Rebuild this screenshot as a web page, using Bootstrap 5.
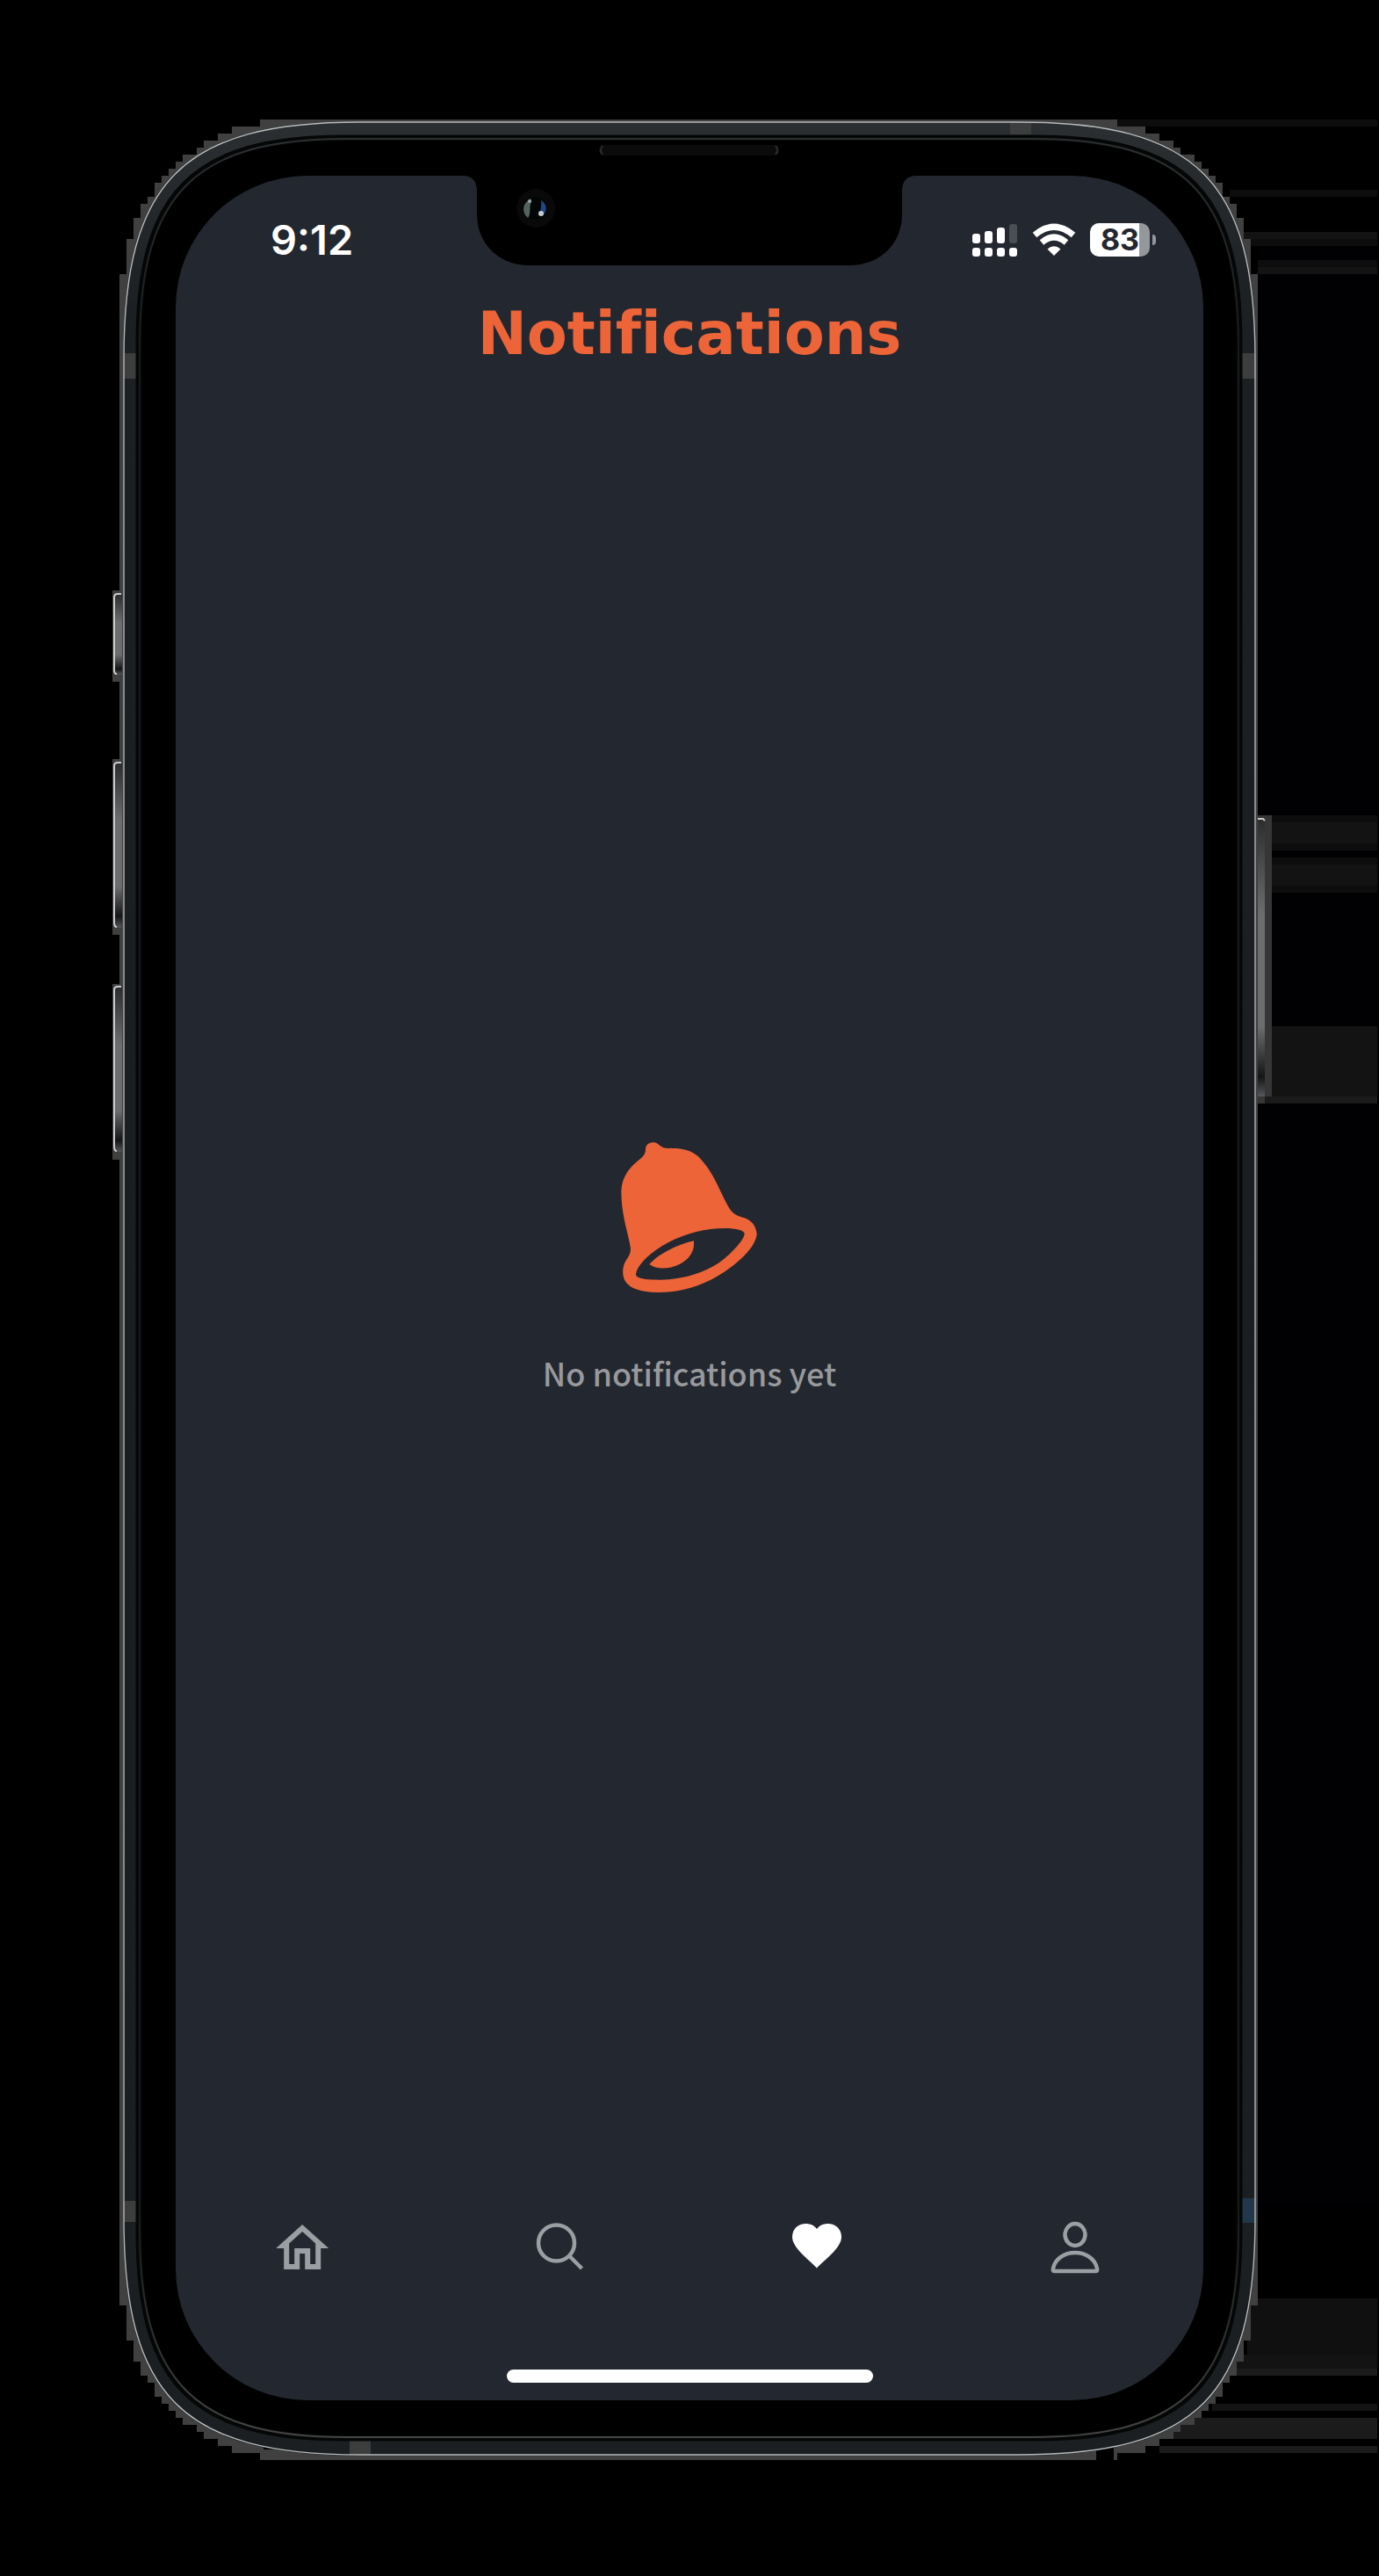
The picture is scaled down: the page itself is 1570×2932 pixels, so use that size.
<!DOCTYPE html>
<html lang="en">
<head>
<meta charset="utf-8">
<meta name="viewport" content="width=device-width, initial-scale=1">
<title>Notifications</title>
<link href="https://cdn.jsdelivr.net/npm/bootstrap@5.3.0/dist/css/bootstrap.min.css" rel="stylesheet">
<style>
  body { background: #000; font-family: "Noto Sans CJK SC", "Noto Sans", sans-serif; }
  .stage { padding: 200px; }
  .shell-art { pointer-events: none; }
  .app-screen { background: #23272f; border-radius: 150px; z-index: 1; }
  .notch-art { width: 516px; height: 102px; }
  .status-row { padding: 50px 54px 0 108px; color: #fff; font-family: Inter, sans-serif; }
  .clock { font-size: 47px; line-height: 46px; font-weight: 600; }
  .battery-box { width: 68px; height: 38px; border-radius: 10px; background: linear-gradient(90deg, #fff 56px, #94979b 56px); color: #23272f; font-size: 34px; line-height: 38px; font-weight: 700; }
  .battery-tip { width: 4px; height: 12px; margin-left: 3px; border-radius: 0 6px 6px 0; background: #94979b; }
  .page-title { margin: 44px 0 0; color: #ec6437; font: 700 67px/80px "DejaVu Sans", sans-serif; font-variant-ligatures: none; }
  .empty-note { gap: 66px; }
  .empty-text { color: #97999d; font-size: 36px; line-height: 48px; font-weight: 500; }
  .tab-row { padding-top: 57px; color: #9b9ea3; }
  .tab-link { color: inherit; line-height: 0; }
  .tab-link.active { color: #fff; }
  .home-bar { width: 417px; height: 15px; margin: 102px auto 20px; border-radius: 8px; background: #fff; }
</style>
</head>
<body>
<div class="stage position-relative d-flex min-vh-100">

  <!-- Device body -->
  <svg class="shell-art position-absolute top-0 start-0 w-100 h-100" viewBox="0 0 1570 2932" preserveAspectRatio="none" aria-hidden="true">
    <defs>
      <linearGradient id="key" x1="0" y1="0" x2="0" y2="1">
        <stop offset="0" stop-color="#2b2c2d"/><stop offset=".35" stop-color="#6c6d6f"/><stop offset=".75" stop-color="#6c6d6f"/><stop offset=".93" stop-color="#141517"/><stop offset="1" stop-color="#55575a"/>
      </linearGradient>
      <linearGradient id="rim" x1="0" y1="138" x2="0" y2="2795" gradientUnits="userSpaceOnUse">
        <stop offset="0" stop-color="#2c2f31"/><stop offset=".08" stop-color="#1c2023"/><stop offset=".5" stop-color="#1a1e20"/><stop offset="1" stop-color="#1b1f21"/>
      </linearGradient>
      <linearGradient id="ring" x1="0" y1="0" x2="0" y2="1">
        <stop offset="0" stop-color="#2d3032"/><stop offset=".1" stop-color="#17191a"/><stop offset=".9" stop-color="#17191a"/><stop offset="1" stop-color="#444"/>
      </linearGradient>
      <path id="steps" d="M300 300V136H296V144H264V152H248V160H232V168H224V176H208V184H200V192H192V200H184V208H176V224H168V232H160V248H152V272H144V312H136V320Z"/>
    </defs>
    <rect x="1432" y="270" width="138" height="2240" fill="#010103"/>
    <g shape-rendering="crispEdges">
      <path fill="#0d0d0d" d="M1256 136h312v8h-312zM1400 216h168v8h-168zM1424 272h144v8h-144zM1432 296h136v8h-136zM1432 928h136v8h-136zM1432 960h136v8h-136zM1432 976h136v8h-136zM1432 1008h136v8h-136z"/>
      <path fill="#131313" d="M1416 264h152v8h-152zM1432 304h136v8h-136zM1448 936h120v24h-120zM1448 984h120v24h-120zM1448 1168h120v80h-120zM1400 2680h168v16h-168zM1380 2736h188v8h-188z"/>
      <path fill="#0f100f" d="M1420 2616h148v64h-148z"/>
      <path fill="#1b1b1b" d="M1440 1248h128v8h-128zM1400 2696h168v8h-168zM1330 2752h238v24h-238zM1320 2784h248v8h-248z"/>
      <g fill="#404040">
        <path d="M296 136H1272V148H296zM296 2788H1248V2800H296zM136 312H146V2620H136zM1424 312H1432V2620H1424z"/>
        <use href="#steps"/>
        <use href="#steps" transform="matrix(-1 0 0 1 1568 0)"/>
        <use href="#steps" transform="matrix(1 0 0 -1 0 2936)"/>
        <use href="#steps" transform="matrix(-1 0 0 -1 1568 2936)"/>
        <path d="M128 672h10v104h-10zM128 864h10v200h-10zM128 1120h10v200h-10z"/>
      </g>
      <path fill="#363636" d="M1432 928h16v320h-8v8h-8z"/>
    </g>
    <g fill="url(#key)">
      <rect x="130" y="676" width="9" height="92" rx="2"/><rect x="130" y="868" width="9" height="188" rx="2"/><rect x="130" y="1123" width="9" height="188" rx="2"/>
      <rect x="1432" y="931" width="8" height="317"/>
    </g>
    <path d="M138 676h-4q-4 0-4 4v83q0 4 3 4M138 868h-4q-4 0-4 4v178q0 5 3 5M138 1123h-4q-4 0-4 4v178q0 5 3 5M1432 932h6l2 2" fill="none" stroke="#c9cacb" stroke-width="2"/>
    <path d="M140 408C140 205 207 138 410 138H1160C1363 138 1430 205 1430 408V2525C1430 2728 1363 2795 1160 2795H410C207 2795 140 2728 140 2525Z" fill="url(#rim)"/>
    <path d="M141 402h14v29h-14zM141 2505h16v24h-16zM1413 402h16v29h-16zM1150 139h24v14h-24zM398 2776h24v18h-24z" fill="#3c3d3d"/>
    <path d="M1413 2502h16v28h-16z" fill="#22384a"/>
    <path d="M141 408C141 206 208 139 410 139H1160C1362 139 1429 206 1429 408V2525C1429 2727 1362 2794 1160 2794H410C208 2794 141 2727 141 2525Z" fill="none" stroke="#b9bcbd" stroke-width="1.4"/>
    <path d="M158 391C158 219 220 157 392 157H1178C1350 157 1411 219 1411 391V2540C1411 2713 1350 2775 1178 2775H392C220 2775 158 2713 158 2540Z" fill="#000" stroke="#050606" stroke-width="7"/>
    <path d="M159 393C159 221 222 158 394 158H1176C1348 158 1410 221 1410 393V2539C1410 2711 1348 2774 1176 2774H394C222 2774 159 2711 159 2539Z" fill="none" stroke="url(#ring)" stroke-width="2"/>
    <rect x="682" y="165" width="205" height="12" rx="5" fill="#0b0b0b"/>
    <path d="M686 166q-4 5 0 10M883 166q4 5 0 10" fill="none" stroke="#2c2d2e" stroke-width="2"/>
  </svg>

  <div class="app-screen position-relative flex-grow-1 d-flex flex-column">
    <!-- Camera housing -->
    <svg class="notch-art position-absolute top-0 start-50 translate-middle-x" viewBox="527 200 516 102" aria-hidden="true">
      <path d="M527 199H1043V200Q1027 200 1027 218V244C1027 278 1001 302 968 302H602C569 302 543 278 543 244V218Q543 200 527 200Z" fill="#000"/>
      <circle cx="610" cy="237" r="22" fill="#090909"/>
      <circle cx="610" cy="237" r="13" fill="#030607"/>
      <path d="M604 226C594 232 594 242 601 248C605 244 602 234 605 229Z" fill="#53645f"/>
      <path d="M616 228C624 233 623 242 617 246C614 240 617 235 616 228Z" fill="#1f4686"/>
      <circle cx="603" cy="229" r="2" fill="#9ba9a5"/><circle cx="616" cy="243" r="3" fill="#c7cbd0"/>
    </svg>

    <div class="status-row d-flex justify-content-between align-items-center">
      <div class="clock">9:12</div>
      <div class="d-flex align-items-center">
        <svg class="me-3" width="52" height="38" viewBox="0 0 52 38" fill="#fff" role="img" aria-label="Signal">
          <rect y="12" width="9" height="11" rx="3"/><rect x="14" y="9" width="9" height="14" rx="3"/><rect x="28" y="5" width="9" height="18" rx="3"/><rect x="42" y="1" width="9" height="22" rx="3" fill="#4b4e54"/>
          <rect y="28" width="9" height="10" rx="3"/><rect x="14" y="28" width="9" height="10" rx="3"/><rect x="28" y="28" width="9" height="10" rx="3"/><rect x="42" y="28" width="9" height="10" rx="3"/>
        </svg>
        <svg class="me-3" width="50" height="38" viewBox="0 0 50 38" role="img" aria-label="Wi-Fi">
          <g fill="none" stroke="#fff" stroke-width="7"><path d="M3 13.500Q25-5 47 13.500"/><path d="M11 22Q25 10 39 22"/></g>
          <path d="M25 37L17.500 29.500Q25 23 32.500 29.500Z" fill="#fff"/>
        </svg>
        <div class="battery-box text-center">83</div>
        <div class="battery-tip"></div>
      </div>
    </div>

    <h1 class="page-title text-center">Notifications</h1>

    <main class="empty-note flex-grow-1 d-flex flex-column align-items-center justify-content-center">
      <svg width="155" height="172" viewBox="323 95 465 516" overflow="visible" aria-hidden="true">
        <path fill="#ec6437" fill-rule="evenodd" d="M404 118C405 103 417 96 431 96C450 97 451 113 472 115C510 117 545 113 583 143C638 197 656 262 690 321C707 347 728 350 746 355C772 366 783 388 784 410C779 451 733 497 675 537C597 589 520 609 445 608C385 607 351 594 336 572C324 554 324 529 332 509C341 489 352 484 353 459C349 418 321 350 321 263C322 221 342 190 369 166C394 144 404 140 404 118ZM371 546C374 519 407 483 461 449C524 411 602 389 674 389C713 389 742 396 742 408C741 426 704 471 655 507C592 548 520 565 450 565C405 565 370 561 371 546ZM417 512C445 479 509 445 569 432C570 456 566 471 549 491C515 525 451 538 417 512Z"/>
      </svg>
      <p class="empty-text mb-0">No notifications yet</p>
    </main>

    <footer>
      <nav class="tab-row d-flex" aria-label="Main">
        <a class="tab-link flex-fill text-center" href="#home" aria-label="Home">
          <svg width="72" height="72" viewBox="0.6 0 24 24" overflow="visible" fill="currentColor"><path d="M12 5.690l5 4.500V18h-2v-6H9v6H7v-7.810l5-4.500M12 3L2 12h3v8h6v-6h2v6h6v-8h3L12 3z"/></svg>
        </a>
        <a class="tab-link flex-fill text-center" href="#search" aria-label="Search">
          <svg width="72" height="72" viewBox="0 0 72 72" fill="none" stroke="currentColor" stroke-width="4.500"><circle cx="30.500" cy="30" r="20.500"/><path d="M45 44.500L59.500 59"/></svg>
        </a>
        <a class="tab-link active flex-fill text-center" href="#notifications" aria-label="Notifications" aria-current="page">
          <svg width="72" height="72" viewBox="0 0 72 72" fill="currentColor"><path d="M35 58.500C27 49.500 7 36 7 23C7 14 14 8 22 8C28 8 32 10 35 14C38 10 42 8 48 8C56 8 63 14 63 23C63 36 43 49.500 35 58.500Z"/></svg>
        </a>
        <a class="tab-link flex-fill text-center" href="#profile" aria-label="Profile">
          <svg width="72" height="72" viewBox="0 0 72 72" fill="none" stroke="currentColor" stroke-width="4.500"><ellipse cx="36" cy="20.500" rx="11.500" ry="12.500"/><path stroke-linejoin="round" d="M12 62H60Q61.500 62 61 59C59 48 48 41 36 41S13 48 11 59Q10.500 62 12 62Z"/></svg>
        </a>
      </nav>
      <div class="home-bar"></div>
    </footer>
  </div>
</div>
<script src="https://cdn.jsdelivr.net/npm/bootstrap@5.3.0/dist/js/bootstrap.bundle.min.js"></script>
</body>
</html>
